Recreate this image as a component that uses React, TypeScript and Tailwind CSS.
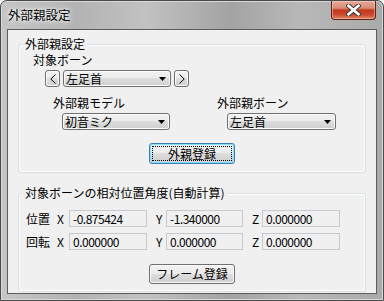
const btnBg =
  "bg-[linear-gradient(180deg,#f2f2f2_0%,#ebebeb_49%,#dddddd_50%,#cfcfcf_100%)]";

function Combo({ value, w }: { value: string; w: string }) {
  return (
    <div
      className={`${w} h-[17px] flex items-center rounded-[3px] border border-[#707070] ${btnBg} shadow-[inset_0_0_0_1px_#fbfbfb] pl-[2px] pr-[4px]`}
    >
      <span className="leading-[14px]">{value}</span>
      <svg className="ml-auto" width="7" height="4" viewBox="0 0 7 4">
        <path d="M0 0h7L3.5 4z" fill="#000" />
      </svg>
    </div>
  );
}

function SmallBtn({ dir }: { dir: "left" | "right" }) {
  return (
    <div
      className={`w-[15px] h-[17px] flex items-center justify-center rounded-[3px] border border-[#707070] ${btnBg} shadow-[inset_0_0_0_1px_#fbfbfb]`}
    >
      <svg width="6" height="10" viewBox="0 0 6 10">
        <path
          d={dir === "left" ? "M5.5 0.5L0.8 5L5.5 9.5" : "M0.5 0.5L5.2 5L0.5 9.5"}
          fill="none"
          stroke="#000"
          strokeWidth="1"
        />
      </svg>
    </div>
  );
}

function Field({ value, w }: { value: string; w: string }) {
  return (
    <div
      className={`${w} h-[17px] flex items-center border border-[#c5cad0] bg-[#f0f0f0] pl-[3px] leading-[14px] tracking-[-0.5px]`}
    >
      {value}
    </div>
  );
}

function VecRow({ label, x, y, z }: { label: string; x: string; y: string; z: string }) {
  return (
    <div className="flex items-center ml-[7px]">
      <span className="w-[31px] leading-[14px]">{label}</span>
      <span className="w-[12px] leading-[14px]">X</span>
      <Field value={x} w="w-[78px]" />
      <span className="ml-[9px] w-[10px] leading-[14px]">Y</span>
      <Field value={y} w="w-[77px]" />
      <span className="ml-[9px] w-[10px] leading-[14px]">Z</span>
      <Field value={z} w="w-[78px]" />
    </div>
  );
}

export default function App() {
  return (
    <div className="w-[384px] h-[301px] overflow-hidden bg-[#f0f0f0]">
      <div className="w-[384px] h-[301px] flex flex-col rounded-t-[7px] border border-[#4a4a4a] bg-[linear-gradient(90deg,#c6c6c6_0%,#b3b3b3_20%,#c2c2c2_38%,#a3a3a3_60%,#b8b8b8_78%,#aaaaaa_100%)] shadow-[inset_0_0_0_1px_#d8d8d8] font-['Noto_Sans_CJK_JP',sans-serif] text-[12px] text-black">
        {/* title bar */}
        <div className="h-[28px] flex items-start shrink-0">
          <span className="ml-[7px] mt-[6px] leading-[16px] text-[12.5px] [text-shadow:0_0_6px_#ffffff,0_0_3px_#ffffff]">
            外部親設定
          </span>
          <div className="ml-auto mr-[7px] w-[45px] h-[19px] flex items-center justify-center rounded-b-[4px] border border-t-0 border-[#5e2217] bg-[linear-gradient(180deg,#e9a99a_0%,#d98a74_40%,#c33a1d_50%,#c9472b_75%,#e08568_100%)] shadow-[inset_0_0_0_1px_rgba(255,220,210,0.45)]">
            <svg width="15" height="12" viewBox="0 0 15 12">
              <path
                d="M2.5 1.8L12.5 10.2M12.5 1.8L2.5 10.2"
                stroke="#3a3a3a"
                strokeWidth="4.6"
                strokeLinecap="square"
              />
              <path
                d="M2.5 1.8L12.5 10.2M12.5 1.8L2.5 10.2"
                stroke="#ffffff"
                strokeWidth="2.6"
                strokeLinecap="square"
              />
            </svg>
          </div>
        </div>

        {/* client area */}
        <div className="ml-[6px] w-[370px] h-[265px] border border-[#5c5c5c] bg-[#f0f0f0] flex flex-col">
          {/* group 1 */}
          <div className="mt-[14px] ml-[10px] w-[348px] h-[129px] rounded-[3px] border border-[#d5dfe5] shadow-[inset_0_0_0_1px_#ffffff] flex flex-col">
            <span className="-mt-[8px] ml-[4px] px-[2px] w-fit bg-[#f0f0f0] leading-[14px]">
              外部親設定
            </span>
            <span className="mt-[2px] ml-[14px] leading-[14px]">対象ボーン</span>
            <div className="mt-[3px] ml-[26px] flex items-center gap-[3px]">
              <SmallBtn dir="left" />
              <Combo value="左足首" w="w-[108px]" />
              <SmallBtn dir="right" />
            </div>
            <div className="mt-[9px] flex">
              <div className="ml-[34px] w-[164px] flex flex-col">
                <span className="leading-[14px]">外部親モデル</span>
                <div className="mt-[3px] ml-[9px]">
                  <Combo value="初音ミク" w="w-[108px]" />
                </div>
              </div>
              <div className="flex flex-col">
                <span className="leading-[14px]">外部親ボーン</span>
                <div className="mt-[3px] ml-[10px]">
                  <Combo value="左足首" w="w-[109px]" />
                </div>
              </div>
            </div>
            <div
              className={`mt-[13px] mx-auto w-[86px] h-[21px] rounded-[3px] border border-[#3c7fb1] ${btnBg} shadow-[inset_0_0_0_1px_#7fe0fb] p-[2px]`}
            >
              <div className="h-full border border-dotted border-black flex items-center justify-center leading-[14px]">
                外親登録
              </div>
            </div>
          </div>

          {/* group 2 */}
          <div className="mt-[20px] ml-[10px] w-[348px] h-[99px] rounded-[3px] border border-[#d5dfe5] shadow-[inset_0_0_0_1px_#ffffff] flex flex-col">
            <span className="-mt-[8px] ml-[4px] px-[2px] w-fit bg-[#f0f0f0] leading-[14px]">
              対象ボーンの相対位置角度(自動計算)
            </span>
            <div className="mt-[10px]">
              <VecRow label="位置" x="-0.875424" y="-1.340000" z="0.000000" />
            </div>
            <div className="mt-[6px]">
              <VecRow label="回転" x="0.000000" y="0.000000" z="0.000000" />
            </div>
            <div
              className={`mt-[14px] mx-auto w-[86px] h-[20px] rounded-[3px] border border-[#707070] ${btnBg} shadow-[inset_0_0_0_1px_#fbfbfb] flex items-center justify-center leading-[14px]`}
            >
              フレーム登録
            </div>
          </div>
        </div>
      </div>
    </div>
  );
}
